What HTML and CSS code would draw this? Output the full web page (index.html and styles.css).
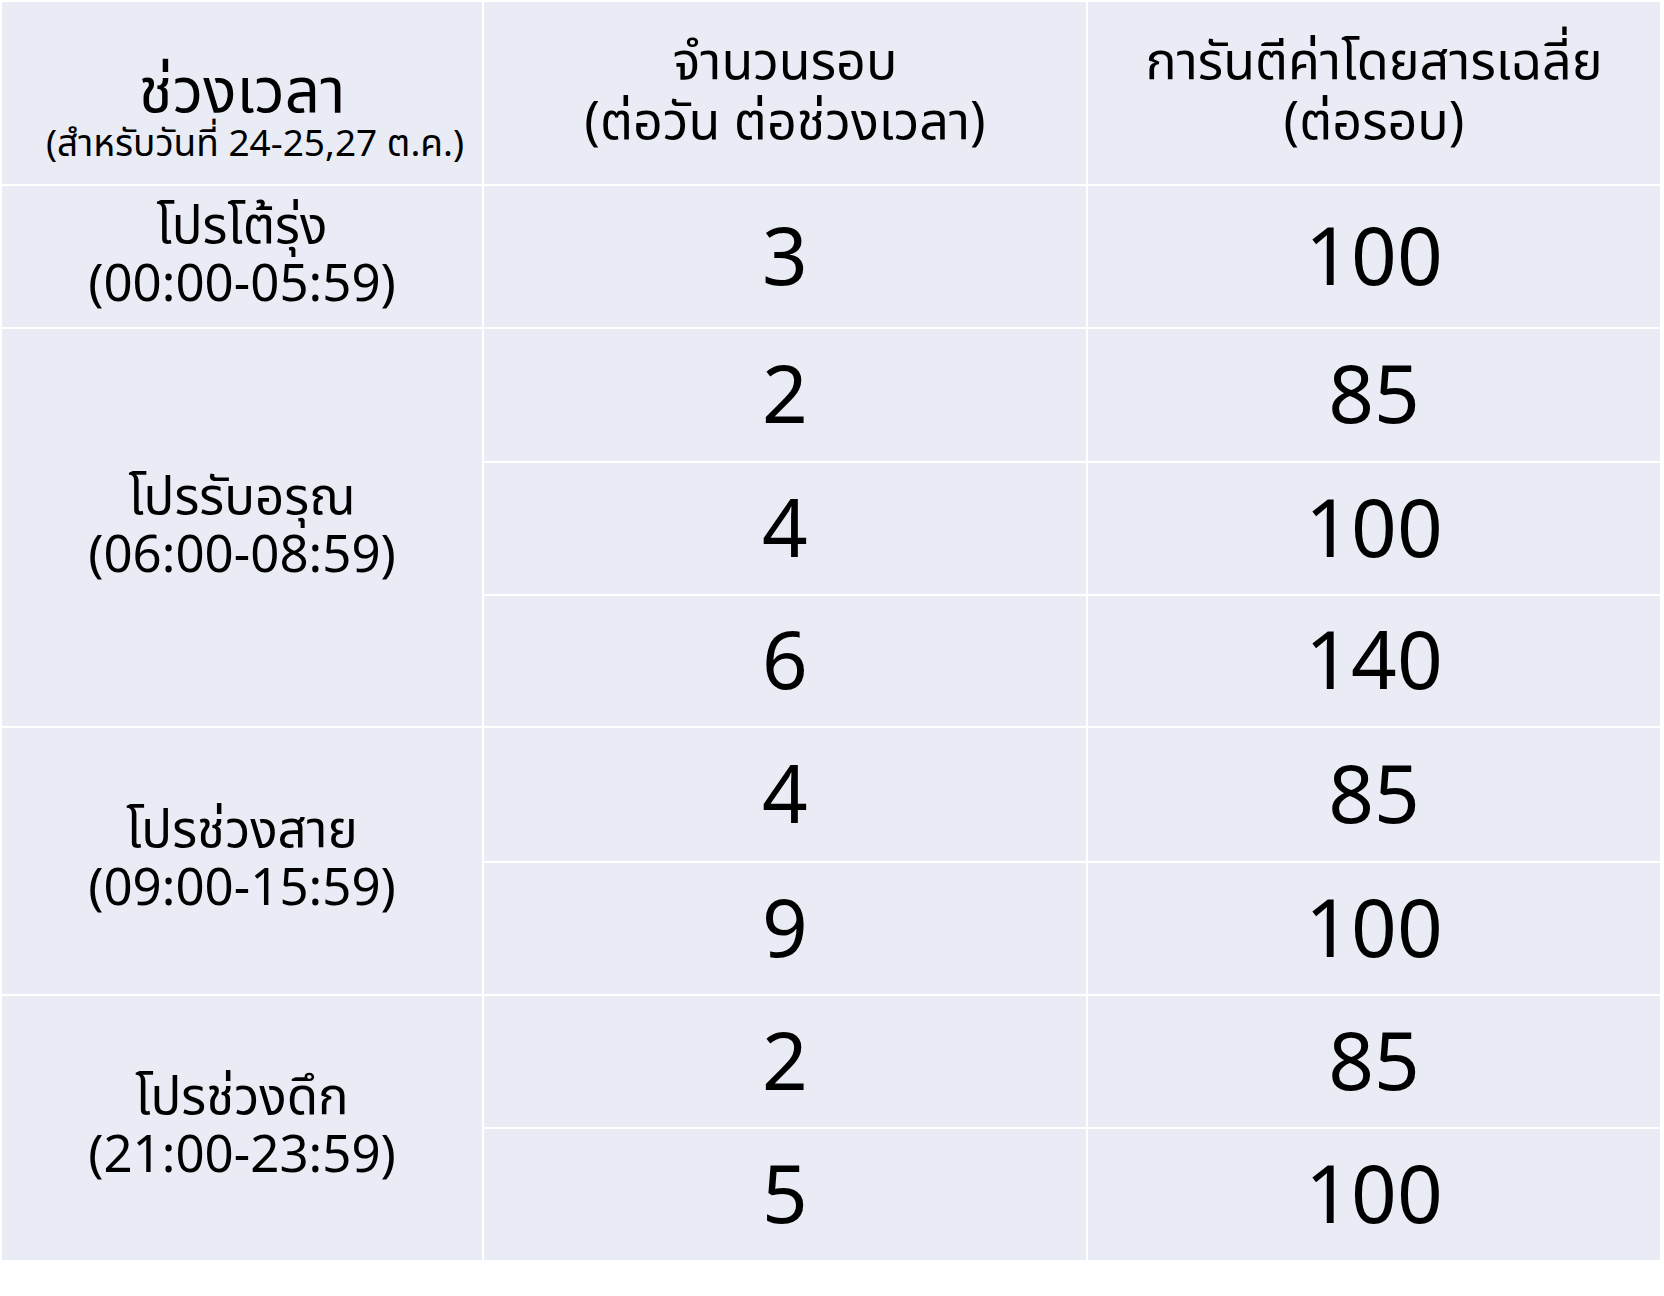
FILE: index.html
```html
<!DOCTYPE html>
<html lang="th">
<head>
<meta charset="utf-8">
<title>ตารางการันตีค่าโดยสาร</title>
<link rel="stylesheet" href="styles.css">
</head>
<body>
<table class="fare-table">
  <colgroup>
    <col class="col-time">
    <col class="col-trips">
    <col class="col-fare">
  </colgroup>
  <thead>
    <tr class="row-head">
      <th class="cell head-time">
        <div class="head-main">ช่วงเวลา</div>
        <div class="head-sub">(สำหรับวันที่ 24-25,27 ต.ค.)</div>
      </th>
      <th class="cell head-col">จำนวนรอบ<br>(ต่อวัน ต่อช่วงเวลา)</th>
      <th class="cell head-col">การันตีค่าโดยสารเฉลี่ย<br>(ต่อรอบ)</th>
    </tr>
  </thead>
  <tbody>
    <tr class="row-first">
      <td class="cell label">โปรโต้รุ่ง<br>(00:00-05:59)</td>
      <td class="cell num">3</td>
      <td class="cell num">100</td>
    </tr>
    <tr class="row-a">
      <td class="cell label" rowspan="3">โปรรับอรุณ<br>(06:00-08:59)</td>
      <td class="cell num">2</td>
      <td class="cell num">85</td>
    </tr>
    <tr class="row-b">
      <td class="cell num">4</td>
      <td class="cell num">100</td>
    </tr>
    <tr class="row-c">
      <td class="cell num">6</td>
      <td class="cell num">140</td>
    </tr>
    <tr class="row-d">
      <td class="cell label" rowspan="2">โปรช่วงสาย<br>(09:00-15:59)</td>
      <td class="cell num">4</td>
      <td class="cell num">85</td>
    </tr>
    <tr class="row-b">
      <td class="cell num">9</td>
      <td class="cell num">100</td>
    </tr>
    <tr class="row-b">
      <td class="cell label" rowspan="2">โปรช่วงดึก<br>(21:00-23:59)</td>
      <td class="cell num">2</td>
      <td class="cell num">85</td>
    </tr>
    <tr class="row-b">
      <td class="cell num">5</td>
      <td class="cell num">100</td>
    </tr>
  </tbody>
</table>
</body>
</html>
```

FILE: styles.css
```css
html, body {
  margin: 0;
  padding: 0;
  background: #ffffff;
}

body {
  font-family: "Noto Sans Thai", "Noto Sans Thai UI", "Noto Sans", "DejaVu Sans", sans-serif;
  color: #000000;
}

.fare-table {
  border-collapse: separate;
  border-spacing: 2px;
  width: 1662px;
  table-layout: fixed;
}

.col-time { width: 480px; }
.col-trips { width: 602px; }
.col-fare { width: 572px; }

.cell {
  background: #e9ebf5;
  padding: 0;
  text-align: center;
  vertical-align: middle;
  font-weight: 400;
}

.row-head { height: 182px; }
.row-first { height: 141px; }
.row-a { height: 132px; }
.row-b { height: 131px; }
.row-c { height: 130px; }
.row-d { height: 133px; }

.head-time {
  vertical-align: top;
  padding-top: 59px;
}

.head-main {
  font-size: 62px;
  line-height: 64px;
}

.head-sub {
  font-size: 37px;
  line-height: 40px;
  white-space: nowrap;
  padding-left: 26px;
}

.head-col {
  font-size: 52px;
  line-height: 60px;
}

.label {
  font-size: 51px;
  line-height: 58px;
}

.num {
  font-family: "Noto Sans", "Open Sans", sans-serif;
  font-size: 80px;
  line-height: 1;
  padding-bottom: 6px;
}
```
